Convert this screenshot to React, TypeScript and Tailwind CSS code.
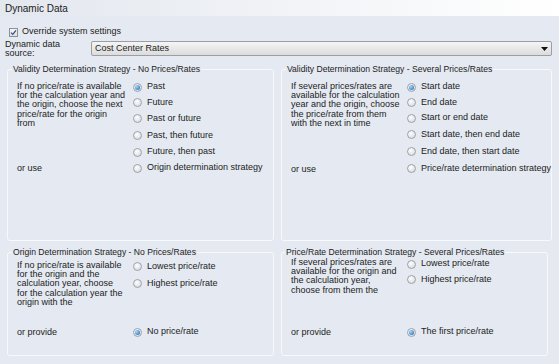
import React from "react";

function Radio({ checked }: { checked?: boolean }) {
  return (
    <span className="relative flex h-[9px] w-[9px] shrink-0 items-center justify-center rounded-full border border-[#9ea3ab] bg-[radial-gradient(circle_at_40%_35%,#ffffff,#cfd3da)]">
      {checked && (
        <span className="h-[5px] w-[5px] rounded-full bg-[radial-gradient(circle_at_35%_35%,#9fd8ff,#1b63ad)]" />
      )}
    </span>
  );
}

function RadioRow({ label, checked, h }: { label: string; checked?: boolean; h: string }) {
  return (
    <div className={`flex items-center gap-[5px] ${h}`}>
      <Radio checked={checked} />
      <span className="whitespace-nowrap">{label}</span>
    </div>
  );
}

type Row = { label: string; checked?: boolean; h: string };

function Group({
  title,
  desc,
  tail,
  rows,
  last,
  spacer,
  pt,
  descMt,
  h,
  legendMl,
}: {
  title: string;
  desc: string[];
  tail: string;
  rows: Row[];
  last: Row;
  spacer: string;
  pt: string;
  descMt: string;
  h: string;
  legendMl: string;
}) {
  return (
    <fieldset className={`box-border rounded-[3px] border border-[#f8f9fc] ${h}`}>
      <legend className={`${legendMl} px-[1px] text-[8.6px] leading-[10px] whitespace-nowrap`}>{title}</legend>
      <div className={`flex pl-[9px] ${pt}`}>
        <div className="flex w-[116px] shrink-0 flex-col justify-between">
          <div className={`${descMt} leading-[9.2px]`}>
            {desc.map((d, i) => (
              <div key={i} className="whitespace-nowrap">
                {d}
              </div>
            ))}
          </div>
          <div className="flex h-[16px] items-center pt-[1px]">{tail}</div>
        </div>
        <div className="flex flex-col">
          {rows.map((r, i) => (
            <RadioRow key={i} label={r.label} checked={r.checked} h={r.h} />
          ))}
          <div className={spacer} />
          <RadioRow label={last.label} checked={last.checked} h={last.h} />
        </div>
      </div>
    </fieldset>
  );
}

export default function App() {
  return (
    <div className="h-[364px] w-[559px] overflow-hidden bg-[#e5e9f1] font-['Liberation_Sans',Arial,sans-serif] text-[9px] text-[#1c1c1c]">
      <div className="flex h-[16px] items-center bg-linear-to-r from-[#e3e7ee] to-white pl-[5px] text-[10px] text-[#1b1b1b]">
        Dynamic Data
      </div>

      <div className="mt-[11px] flex h-[10px] items-center gap-[4px] pl-[9px]">
        <span className="flex h-[9px] w-[9px] items-center justify-center border border-[#8e9094] bg-linear-to-b from-[#f4f5f7] to-[#dde0e5]">
          <svg width="7" height="7" viewBox="0 0 7 7">
            <path d="M1 3.6 L2.8 5.4 L6 1.4" fill="none" stroke="#3b4f82" strokeWidth="1.3" />
          </svg>
        </span>
        <span>Override system settings</span>
      </div>

      <div className="mt-[4px] flex h-[15px] items-start">
        <div className="-mt-[1px] w-[91px] shrink-0 pl-[5px] leading-[9px]">
          <div>Dynamic data</div>
          <div>source:</div>
        </div>
        <div className="flex h-[15px] w-[461px] items-center justify-between rounded-[2px] border border-[#9b9ea3] bg-linear-to-b from-[#f5f5f5] to-[#dcdcdc] pl-[3px] pr-[3px]">
          <span>Cost Center Rates</span>
          <svg width="7" height="4" viewBox="0 0 7 4">
            <path d="M0 0 H7 L3.5 4 Z" fill="#111" />
          </svg>
        </div>
      </div>

      <div className="mt-[8px] grid grid-cols-[267px_267px] gap-x-[7px] gap-y-[6px] pl-[7px]">
        <Group
          title="Validity Determination Strategy - No Prices/Rates"
          desc={[
            "If no price/rate  is available",
            "for the calculation year and",
            "the origin, choose the next",
            "price/rate for the origin",
            "from",
          ]}
          tail="or use"
          rows={[
            { label: "Past", checked: true, h: "h-[16px]" },
            { label: "Future", h: "h-[15px]" },
            { label: "Past or future", h: "h-[17px]" },
            { label: "Past, then future", h: "h-[17px]" },
            { label: "Future, then past", h: "h-[16px]" },
          ]}
          spacer="h-0"
          last={{ label: "Origin determination strategy", h: "h-[16px]" }}
          pt="pt-[5px]"
          descMt="mt-[3px]"
          h="h-[177px]"
          legendMl="ml-[4px]"
        />
        <Group
          title="Validity Determination Strategy - Several Prices/Rates"
          desc={[
            "If several prices/rates are",
            "available for the calculation",
            "year and the origin, choose",
            "the price/rate from them",
            "with the next in time",
          ]}
          tail="or use"
          rows={[
            { label: "Start date", checked: true, h: "h-[16px]" },
            { label: "End date", h: "h-[15px]" },
            { label: "Start or end date", h: "h-[16px]" },
            { label: "Start date, then end date", h: "h-[17px]" },
            { label: "End date, then start date", h: "h-[17px]" },
          ]}
          spacer="h-0"
          last={{ label: "Price/rate determination strategy", h: "h-[17px]" }}
          pt="pt-[5px]"
          descMt="mt-[3px]"
          h="h-[177px]"
          legendMl="ml-[4px]"
        />
        <Group
          title="Origin Determination Strategy - No Prices/Rates"
          desc={[
            "If no price/rate is available",
            "for the origin and the",
            "calculation year, choose",
            "for the calculation year the",
            "origin with the",
          ]}
          tail="or provide"
          rows={[
            { label: "Lowest price/rate", h: "h-[17px]" },
            { label: "Highest price/rate", h: "h-[17px]" },
          ]}
          spacer="h-[32px]"
          last={{ label: "No price/rate", checked: true, h: "h-[16px]" }}
          pt="pt-[1px]"
          descMt="mt-[3px]"
          h="h-[109px]"
          legendMl="ml-[4px]"
        />
        <Group
          title="Price/Rate Determination Strategy - Several Prices/Rates"
          desc={[
            "If several prices/rates are",
            "available for the origin and",
            "the calculation year,",
            "choose from them the",
          ]}
          tail="or provide"
          rows={[
            { label: "Lowest price/rate", h: "h-[14px]" },
            { label: "Highest price/rate", h: "h-[17px]" },
          ]}
          spacer="h-[36px]"
          last={{ label: "The first price/rate", checked: true, h: "h-[16px]" }}
          pt="pt-0"
          descMt="mt-[1px]"
          h="h-[109px]"
          legendMl="ml-[3px]"
        />
      </div>
    </div>
  );
}
